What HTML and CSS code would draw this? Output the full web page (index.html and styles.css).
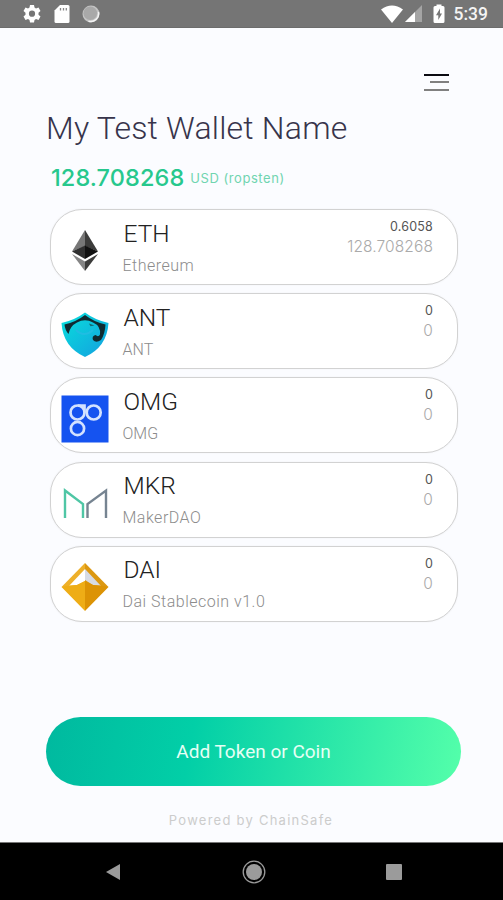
FILE: index.html
```html
<!DOCTYPE html>
<html lang="en">
<head>
    <meta charset="UTF-8">
    <meta name="viewport" content="width=device-width, initial-scale=1.0">
    <title>My Test Wallet Name</title>
    <link rel="stylesheet" href="styles.css">
</head>
<body>

<!-- Android status bar -->
<div class="status-bar">
    <div class="status-left">
        <svg width="20" height="20" viewBox="0 0 20 20">
            <path d="M8 1h4l.5 2.6 1.5.9 2.5-.9 2 3.4-2 1.7v2l2 1.7-2 3.5-2.5-.9-1.5.9L12 18.500H8l-.5-2.600-1.500-.9-2.500.9-2-3.500 2-1.700v-2L1.500 7l2-3.400 2.500.9 1.500-.9zM10 6.600a3.100 3.100 0 1 0 0 6.200 3.100 3.100 0 0 0 0-6.200z" fill="#fff"/>
        </svg>
        <svg width="16" height="20" viewBox="0 0 16 20">
            <path d="M6 1h8q1.500 0 1.500 1.500v15Q15.500 19 14 19H2Q.5 19 .5 17.500V6.500z" fill="#fff"/>
            <path d="M6.500 4v2.500M9.500 4v2.500M12.300 4v2.500" stroke="#888" stroke-width="1.300"/>
        </svg>
        <svg width="18" height="18" viewBox="0 0 18 18">
            <circle cx="9" cy="9" r="8.500" fill="#c4c4c4"/>
            <circle cx="8.300" cy="8.300" r="6.800" fill="#a9a9a9"/>
            <path d="M16.500 7a8 8 0 0 1-10 9.200" fill="none" stroke="#f4f4f4" stroke-width="1.500"/>
        </svg>
    </div>
    <div class="status-right">
        <svg class="wifi" width="22" height="18" viewBox="0 0 22 18">
            <path d="M0 4.500Q11-3.500 22 4.500L11 18z" fill="#fff"/>
        </svg>
        <svg class="signal" width="17" height="17" viewBox="0 0 17 17">
            <path d="M17 0v17H0z" fill="#a4a4a4"/>
            <path d="M10 7v10H0z" fill="#fff"/>
        </svg>
        <svg class="battery" width="12" height="20" viewBox="0 0 12 20">
            <path d="M3.500 2V.5h5V2H10q1.500 0 1.500 1.500v14Q11.500 19 10 19H2Q.5 19 .5 17.500v-14Q.5 2 2 2z" fill="#fff"/>
            <path d="M7 4.500L3 11.200h2.300v4.800L9 9.500H7z" fill="#777"/>
        </svg>
        <span class="clock">5:39</span>
    </div>
</div>

<div class="wallet">
    <div class="menu-row">
        <div class="menu">
            <span class="line dark"></span>
            <span class="line short"></span>
            <span class="line"></span>
        </div>
    </div>

    <h1>My Test Wallet Name</h1>
    <div class="balance">
        <span class="total">128.708268</span>
        <span class="currency">USD (ropsten)</span>
    </div>

    <!-- Token list -->
    <div class="tokens">
        <div class="token">
            <svg class="token-icon" viewBox="0 0 48 48">
                <path d="M24 3L11 24.500 24 19z" fill="#777"/>
                <path d="M24 3l13 21.500L24 19z" fill="#3c3c3b"/>
                <path d="M24 18.500L11 24.500l13 7.500z" fill="#303030"/>
                <path d="M24 18.500l13 6L24 32z" fill="#111"/>
                <path d="M11 27l13 7.500V44z" fill="#858585"/>
                <path d="M37 27l-13 7.500V44z" fill="#3c3c3b"/>
            </svg>
            <div class="token-info">
                <div class="symbol">ETH</div>
                <div class="name wide">Ethereum</div>
            </div>
            <div class="amounts">
                <div class="amount">0.6058</div>
                <div class="value">128.708268</div>
            </div>
        </div>

        <div class="token">
            <svg class="token-icon" viewBox="0 0 48 48">
                <defs>
                    <linearGradient id="ant" x1="0" y1="0" x2="1" y2="1">
                        <stop offset="0" stop-color="#08e0dc"/>
                        <stop offset="1" stop-color="#149fdf"/>
                    </linearGradient>
                </defs>
                <path d="M24 1.500Q34 9 47.500 12Q46 36 24 46Q2 36 .5 12Q14 9 24 1.500z" fill="url(#ant)"/>
                <!-- dark crest and beak round the eagle head -->
                <path d="M3.500 13.500Q15 11 24 4Q33 11 44.500 13.500Q44 23 40 29Q35 32.500 32 29Q30.500 25 34.500 24Q37.500 26.500 39 23.500Q40 15 32 11.500Q24 7 16 11.500Q9 15 7.500 23Q4 19 3.500 13.500z" fill="#102b31"/>
                <path d="M28 12.500l5.500 2-4 .8z" fill="#176772"/>
                <path d="M15 19q8 8 17 0" fill="none" stroke="#20bde2" stroke-width="2"/>
            </svg>
            <div class="token-info">
                <div class="symbol">ANT</div>
                <div class="name">ANT</div>
            </div>
            <div class="amounts">
                <div class="amount">0</div>
                <div class="value">0</div>
            </div>
        </div>

        <div class="token">
            <svg class="token-icon" viewBox="0 0 48 48">
                <path d="M.5.500h47v47H.5z" fill="#1553f0"/>
                <g fill="none" stroke="#d3e2ff" stroke-width="2.700">
                    <circle cx="16.500" cy="17.500" r="7"/>
                    <circle cx="32.700" cy="17.500" r="7"/>
                    <circle cx="16.500" cy="33.500" r="6.600"/>
                    <path d="M17 10.500h6.500v7"/>
                </g>
            </svg>
            <div class="token-info">
                <div class="symbol">OMG</div>
                <div class="name">OMG</div>
            </div>
            <div class="amounts">
                <div class="amount">0</div>
                <div class="value">0</div>
            </div>
        </div>

        <div class="token">
            <svg class="token-icon" viewBox="0 0 48 48">
                <g fill="none" stroke-width="2.400">
                    <path d="M4 39V11.500L22 25v14" stroke="#4fc6a5"/>
                    <path d="M26.500 39V25L45 11.500V39" stroke="#768491"/>
                </g>
            </svg>
            <div class="token-info">
                <div class="symbol">MKR</div>
                <div class="name wide">MakerDAO</div>
            </div>
            <div class="amounts">
                <div class="amount">0</div>
                <div class="value">0</div>
            </div>
        </div>

        <div class="token">
            <svg class="token-icon" viewBox="0 0 48 48">
                <path d="M24 0L.5 24H24z" fill="#eeb029"/>
                <path d="M24 0l23.500 24H24z" fill="#dc9811"/>
                <path d="M24 6L8 23l8-1 8-4z" fill="#fff"/>
                <path d="M24 6l16 17-8-1-8-5z" fill="#d7dbe4"/>
                <path d="M.5 24L8 22.500 16 22l8-4v30z" fill="#eead16"/>
                <path d="M47.500 24L40 22.500 32 22l-8-4v30z" fill="#dc9305"/>
            </svg>
            <div class="token-info">
                <div class="symbol">DAI</div>
                <div class="name wide">Dai Stablecoin v1.0</div>
            </div>
            <div class="amounts">
                <div class="amount">0</div>
                <div class="value">0</div>
            </div>
        </div>
    </div>

    <button class="add-btn">Add Token or Coin</button>
    <div class="powered">Powered by ChainSafe</div>
</div>

<!-- Android navigation bar -->
<div class="nav-bar">
    <svg width="16" height="18" viewBox="0 0 16 18"><path d="M15 1v16L1 9z" fill="#9b9b9b"/></svg>
    <svg width="24" height="24" viewBox="0 0 24 24">
        <circle cx="12" cy="12" r="8" fill="#9b9b9b"/>
        <circle cx="12" cy="12" r="10.800" fill="none" stroke="#9b9b9b" stroke-width="1.300"/>
    </svg>
    <svg width="16" height="16" viewBox="0 0 16 16"><rect width="16" height="16" rx="1" fill="#9b9b9b"/></svg>
</div>

</body>
</html>
```

FILE: styles.css
```css
* {
    box-sizing: border-box;
}

body {
    display: flex;
    flex-direction: column;
    height: 900px;
    margin: 0;
    overflow: hidden;
    background: #fbfcff;
    font-family: Roboto, sans-serif;
}

.status-bar {
    display: flex;
    justify-content: space-between;
    height: 28px;
    padding: 0 15px 0 22px;
    background: #757575;
    border-bottom: 1px solid #6c6c6c;
}

.status-left,
.status-right {
    display: flex;
    align-items: center;
}

.status-left {
    gap: 12px;
}

.signal {
    margin: 0 11px 0 2px;
}

.clock {
    margin-left: 9px;
    color: #f4f4f4;
    font-size: 17.5px;
    font-weight: 500;
}

.wallet {
    display: flex;
    flex-direction: column;
    height: 814px;
    padding: 0 42px 0 46px;
}

.menu-row {
    display: flex;
    justify-content: flex-end;
    height: 81px;
    padding: 46px 12px 0 0;
}

.menu {
    display: flex;
    flex-direction: column;
    align-items: flex-end;
    width: 25px;
}

.line {
    width: 25px;
    height: 2px;
    background: #808080;
}

.line.dark {
    background: #0b0b12;
}

.line.short {
    width: 19px;
    margin: 5px 0 6px;
}

h1 {
    margin: 0;
    color: #37344b;
    font-size: 32px;
    font-weight: 300;
    line-height: 38px;
    letter-spacing: 0.2px;
    white-space: nowrap;
}

.balance {
    display: flex;
    align-items: center;
    gap: 6px;
    height: 62px;
    padding: 0 0 0 5px;
    font-family: Inter, sans-serif;
    line-height: 30px;
}

.total {
    color: #27c88d;
    font-size: 23.5px;
    font-weight: 500;
    letter-spacing: 0.1px;
}

.currency {
    color: #70d5b0;
    font-size: 13px;
    letter-spacing: 0.55px;
}

.tokens {
    display: flex;
    flex-direction: column;
    gap: 8.2px;
    padding: 0 3px 0 4px;
}

.token {
    display: flex;
    height: 76px;
    padding: 0 24px 0 10px;
    background: #fff;
    border: 1px solid #d2d2d2;
    border-radius: 32px;
    box-shadow: 0 0 2px rgba(0, 0, 0, 0.06);
}

.token-icon {
    width: 48px;
    height: 48px;
    margin-top: 16.5px;
}

.token-info {
    flex: 1;
    padding: 7.5px 0 0 13.5px;
}

.symbol {
    padding-left: 1px;
    color: #222;
    font-size: 24.5px;
    font-weight: 300;
    line-height: 32px;
}

.name {
    color: #8c8c8c;
    font-size: 16px;
    font-weight: 300;
    line-height: 31px;
}

.name.wide {
    letter-spacing: 0.5px;
}

.amounts {
    padding-top: 7px;
    font-family: Inter, sans-serif;
    line-height: 20px;
    text-align: right;
}

.amount {
    color: #555;
    font-size: 12.5px;
    letter-spacing: 0.2px;
}

.value {
    color: #aaa;
    font-size: 15.5px;
    font-weight: 300;
    letter-spacing: 0.1px;
}

.add-btn {
    flex: none;
    width: 415px;
    height: 69px;
    margin-top: 95px;
    border: none;
    border-radius: 35px;
    background: linear-gradient(100deg, #00b99f 0%, #02cfa7 35%, #54ffaa 100%);
    color: #e5fff5;
    font-family: Roboto, sans-serif;
    font-size: 19px;
    cursor: pointer;
}

.powered {
    margin-top: 26px;
    padding-right: 5px;
    color: #ccc;
    font-family: Inter, sans-serif;
    font-size: 13px;
    line-height: 16px;
    letter-spacing: 1.25px;
    text-align: center;
}

.nav-bar {
    display: flex;
    justify-content: space-between;
    align-items: center;
    height: 58px;
    padding: 0 101px 0 105px;
    background: #000;
    border-top: 1px solid #777;
}
```
